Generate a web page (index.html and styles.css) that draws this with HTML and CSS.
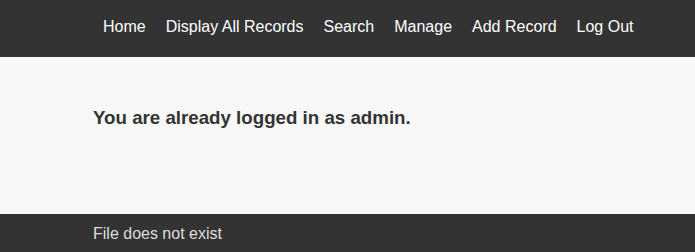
FILE: index.html
```html
<!DOCTYPE html>
<html>
<head>
<meta charset="utf-8">
<link rel="stylesheet" href="styles.css">
</head>
<body>
<header class="site-header">
  <nav class="nav">
    <a href="#">Home</a>
    <a href="#">Display All Records</a>
    <a href="#">Search</a>
    <a href="#">Manage</a>
    <a href="#">Add Record</a>
    <a href="#">Log Out</a>
  </nav>
</header>
<main class="content">
  <h3 class="message">You are already logged in as admin.</h3>
</main>
<footer class="site-footer">
  <p class="footer-text">File does not exist</p>
</footer>
</body>
</html>
```
FILE: styles.css
```css
html, body {
  margin: 0;
  padding: 0;
  background: #f7f7f7;
  font-family: "Liberation Sans", Arial, sans-serif;
}
.site-header {
  background: #333333;
  height: 57px;
  box-sizing: border-box;
  padding: 17px 0 0 93px;
}
.nav {
  display: flex;
}
.nav a {
  color: #ffffff;
  text-decoration: none;
  font-size: 16px;
  line-height: 20px;
  padding: 0 10px;
}
.content {
  height: 157px;
  box-sizing: border-box;
  padding: 50px 0 0 93px;
}
.message {
  margin: 0;
  font-size: 18.72px;
  line-height: 22px;
  color: #333333;
  font-weight: bold;
}
.site-footer {
  background: #333333;
  height: 38px;
  box-sizing: border-box;
  padding: 10px 0 0 93px;
}
.footer-text {
  margin: 0;
  color: #dddddd;
  font-size: 16px;
  line-height: 20px;
}
```
